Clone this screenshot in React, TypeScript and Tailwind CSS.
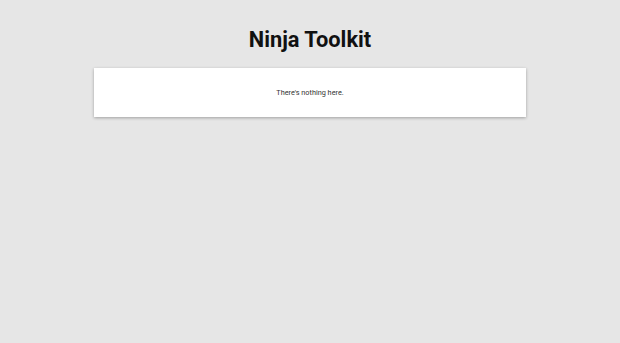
export default function App() {
  return (
    <main className="min-h-[343px] w-full bg-[#e6e6e6] pt-[24px]" style={{ fontFamily: "Roboto, sans-serif" }}>
      <h1 className="text-center text-[21.8px] font-bold leading-[32px] text-[#111]">Ninja Toolkit</h1>
      <div className="mx-auto mt-[12px] flex h-[49px] w-[432px] items-center justify-center bg-white pt-[2px] shadow-[0_1px_3px_rgba(0,0,0,0.3)]">
        <p className="text-[7.3px] text-[#333]">There's nothing here.</p>
      </div>
    </main>
  );
}
